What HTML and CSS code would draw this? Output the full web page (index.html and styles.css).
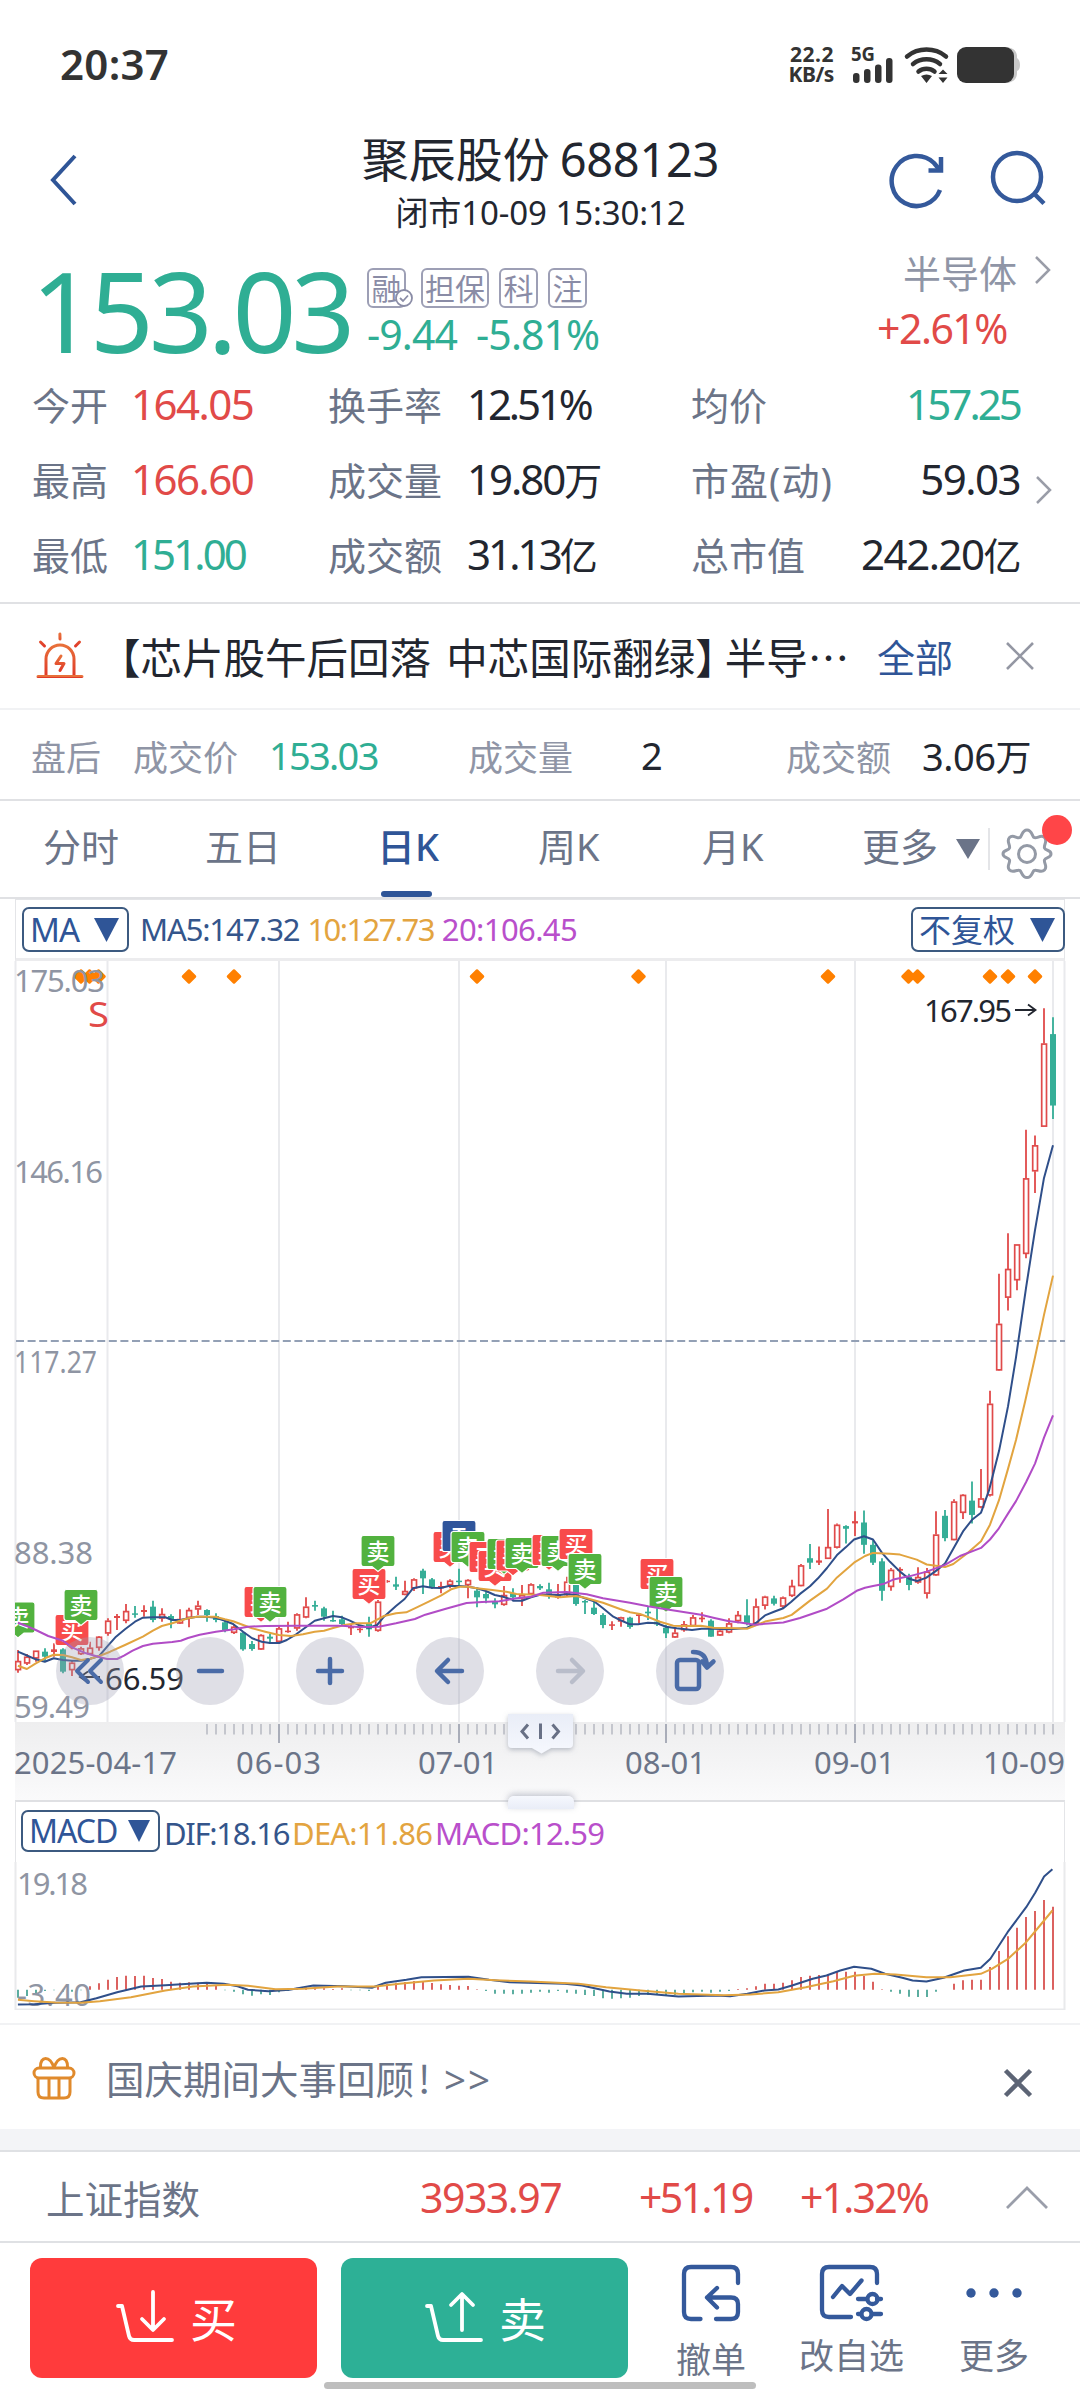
FILE: index.html
```html
<!DOCTYPE html>
<html lang="zh-CN">
<head>
<meta charset="utf-8">
<title>聚辰股份 688123</title>
<link rel="stylesheet" href="styles.css">
</head>
<body>
<main class="app">

<div class="status">
  <span class="clock">20:37</span>
  <div class="status-right">
    <div class="speed"><span class="rate">22.2</span><span>KB/s</span></div>
    <svg class="signal" width="46" height="40" viewBox="0 0 46 40">
      <text x="1" y="15.5" class="net" textLength="24" lengthAdjust="spacingAndGlyphs">5G</text>
      <rect x="3" y="28" width="6.5" height="10" rx="3"/><rect x="14" y="24" width="6.5" height="14" rx="3"/>
      <rect x="25" y="19.500" width="6.500" height="18.500" rx="3"/><rect x="36" y="13" width="6.500" height="25" rx="3"/>
    </svg>
    <svg class="wifi" width="48" height="40" viewBox="0 0 48 40">
      <g fill="none" stroke="#333" stroke-width="4.500" stroke-linecap="round">
        <path d="M4 11.500A31 31 0 0 1 43 11.500"/><path d="M10 19A22 22 0 0 1 37 19"/><path d="M15.500 26.500A13 13 0 0 1 31.500 26.500"/>
      </g>
      <path fill="#333" d="M18 31Q23.500 28 29 31L23.500 38ZM35.500 29L40 24.500L44.500 29ZM35.500 32.500H44.500L40 38Z"/>
    </svg>
    <svg class="battery" width="66" height="40" viewBox="0 0 66 40">
      <path fill="#c8c8c8" d="M48 2Q61 2 61 12V28Q61 38 48 38ZM61 13Q64 15 64 20T61 26Z"/>
      <rect x="1" y="2" width="57" height="36" rx="9" fill="#333"/>
    </svg>
  </div>
</div>

<header class="head">
  <svg class="back" width="30" height="54" viewBox="0 0 30 54"><path d="M26 3L4 27L26 51" fill="none" stroke="#2f5597" stroke-width="4"/></svg>
  <div class="titles">
    <div class="title"><span class="name">聚辰股份</span> <span class="code">688123</span></div>
    <div class="subtitle">闭市10-09 15:30:12</div>
  </div>
  <div class="head-icons">
    <svg width="60" height="60" viewBox="0 0 60 60"><g fill="none" stroke="#34599b" stroke-width="4.500"><path d="M53 40A25 25 0 1 1 47 13L52 19"/><path d="M41.500 20.500H54V7"/></g></svg>
    <svg width="60" height="60" viewBox="0 0 60 60"><g fill="none" stroke="#34599b" stroke-width="4.500"><circle cx="27" cy="27" r="24"/><path d="M43.500 43L54 53.500"/></g></svg>
  </div>
</header>

<section class="quote">
  <div class="price down">153.03</div>
  <div class="quote-mid">
    <div class="tags">
      <span class="tag">融<svg class="tick" width="20" height="20" viewBox="0 0 20 20"><circle cx="10" cy="10" r="8" fill="#fff" stroke="#8a8ca6" stroke-width="1.800"/><path d="M6 10L9 13L14 7.500" fill="none" stroke="#8a8ca6" stroke-width="1.800"/></svg></span>
      <span class="tag wide">担保</span><span class="tag">科</span><span class="tag">注</span>
    </div>
    <div class="change down"><span>-9.44</span><span>-5.81%</span></div>
  </div>
  <div class="sector">
    <div class="sector-name">半导体<svg width="18" height="30" viewBox="0 0 18 30"><path d="M2 2L15 15L2 28" fill="none" stroke="#9a9da8" stroke-width="2.500"/></svg></div>
    <div class="sector-chg up">+2.61%</div>
  </div>
</section>

<section class="stats">
  <span class="k">今开</span><span class="v up">164.05</span><span class="k">换手率</span><span class="v pct">12.51%</span><span class="k">均价</span><span class="v end tight down">157.25</span>
  <span class="k">最高</span><span class="v up">166.60</span><span class="k">成交量</span><span class="v vol">19.80<i>万</i></span><span class="k paren">市盈(动)</span><span class="v end">59.03</span>
  <span class="k">最低</span><span class="v tight down">151.00</span><span class="k">成交额</span><span class="v tight">31.13<i>亿</i></span><span class="k">总市值</span><span class="v end">242.20<i>亿</i></span>
  <svg class="more-arrow" width="18" height="30" viewBox="0 0 18 30"><path d="M2 2L15 15L2 28" fill="none" stroke="#9a9da8" stroke-width="2.500"/></svg>
</section>

<section class="news">
  <svg class="siren" width="48" height="50" viewBox="0 0 48 50">
    <defs><linearGradient id="hot" x1="0" y1="0" x2="0" y2="1"><stop offset="0" stop-color="#e8703a"/><stop offset="1" stop-color="#e03a28"/></linearGradient></defs>
    <g fill="none" stroke="url(#hot)" stroke-width="3" stroke-linecap="round" stroke-linejoin="round">
      <path d="M10 46V29A14 14 0 0 1 38 29V46"/><path d="M2 46.500L46 46.600"/><path d="M23.900 4L24 9M4.500 12L8.500 16M43.500 12L39.500 16"/><path d="M25 26L20 33.500H28L24 40.500"/>
    </g>
  </svg>
  <span class="headline">【芯片股午后回落 中芯国际翻绿<span class="close-q">】</span>半导<span class="dots">⋯</span></span>
  <span class="all">全部</span>
  <svg class="x" width="32" height="32" viewBox="0 0 32 32"><path d="M3 3L29 29M29 3L3 29" stroke="#9497a3" stroke-width="2.600"/></svg>
</section>

<section class="after">
  <span class="a1">盘后</span><span class="a2">成交价</span><b class="down a3">153.03</b><span class="a4">成交量</span><b class="a5">2</b><span class="a6">成交额</span><b class="a7">3.06<i>万</i></b>
</section>

<nav class="tabs">
  <span class="t1">分时</span><span class="t2">五日</span><span class="t3 on">日K</span><span class="t4">周K</span><span class="t5">月K</span><span class="t6">更多</span>
  <svg class="tri" width="24" height="20" viewBox="0 0 24 20"><path d="M0 0H24L12 20Z" fill="#6b7488"/></svg>
  <span class="sep"></span>
  <span class="gear">
    <svg width="52" height="54" viewBox="0 0 52 54"><g fill="none" stroke="#949aa6" stroke-width="3" stroke-linejoin="round"><path d="M26 4C31 4 31 10 33 11.500C36 13 40 8 43.500 11.500C47 15 42.500 19 43.500 22C44.500 25 50 23.500 50 28C50 32 44.500 31 43.500 34C42.500 37 47 40.500 43.500 44C40 47.500 36 43 33 44.500C31 46 31 51.500 26 51.500C21 51.500 21 46 19 44.500C16 43 12 47.500 8.500 44C5 40.500 9.500 37 8.500 34C7.500 31 2 32 2 28C2 23.500 7.500 25 8.500 22C9.500 19 5 15 8.500 11.500C12 8 16 13 19 11.500C21 10 21 4 26 4Z"/><circle cx="26" cy="28" r="8.500"/></g></svg>
    <em class="badge"></em>
  </span>
</nav>

<section class="panel">
  <div class="toolbar">
    <span class="select">MA<svg width="25" height="24" viewBox="0 0 25 24"><path d="M0 0H25L12.500 24Z" fill="#2f5597"/></svg></span>
    <span class="legend ma"><span class="blue">MA5:147.32</span><span class="gold">10:127.73</span><span class="violet">20:106.45</span></span>
    <span class="select right">不复权<svg width="25" height="24" viewBox="0 0 25 24"><path d="M0 0H25L12.500 24Z" fill="#2f5597"/></svg></span>
  </div>
  <svg class="kline" width="1080" height="839" viewBox="0 0 1080 839">
    <defs>
      <linearGradient id="strip" x1="0" y1="0" x2="0" y2="1"><stop offset="0" stop-color="#eeeeef"/><stop offset="1" stop-color="#fafafb"/></linearGradient>
      <linearGradient id="handle" x1="0" y1="0" x2="0" y2="1"><stop offset="0" stop-color="#e9edf7"/><stop offset="1" stop-color="#f6f8fe"/></linearGradient>
      <filter id="soft" x="-20%" y="-30%" width="140%" height="180%"><feDropShadow dx="0" dy="2" stdDeviation="2.500" flood-color="#8890a0" flood-opacity=".55"/></filter>
      <clipPath id="plot"><rect x="15" y="0" width="1050" height="762"/></clipPath>
    </defs>
    <g id="grid"></g>
    <rect x="15" y="761" width="1050" height="78" fill="url(#strip)"/>
    <path d="M16 380H1065" stroke="#93a0b5" stroke-width="2" stroke-dasharray="8 3.600"/>
    <g id="ticks"></g>
    <g id="diamonds" fill="#ff8000"></g>
    <g class="scale">
      <text x="14" y="31" textLength="91">175.03</text><text x="14" y="221.500" textLength="89">146.16</text><text x="14" y="411.500" textLength="83" lengthAdjust="spacingAndGlyphs">117.27</text><text x="14" y="603" textLength="79">88.38</text><text x="14" y="757" textLength="76">59.49</text>
    </g>
    <text x="88" y="66" class="s-mark" textLength="21" lengthAdjust="spacingAndGlyphs">S</text>
    <g id="candles" clip-path="url(#plot)"></g>
    <g id="lines" fill="none" stroke-width="2" stroke-linejoin="round"></g>
    <g id="badges" clip-path="url(#plot)"></g>
    <g id="over" fill="none" stroke-width="2" stroke-linejoin="round" clip-path="url(#plot)"></g>
    <g class="extreme"><text x="924" y="60.500" textLength="88">167.95</text><text x="105" y="728.500" textLength="79">66.59</text>
      <path d="M1015 49H1035M1028 43.500L1035.500 49L1028 54.500M100 716H80M88 710.500L80 716L88 721.500" fill="none" stroke="#22262f" stroke-width="1.800"/></g>
    <g fill="#9d9fb4" fill-opacity=".33"><circle cx="90" cy="710" r="34"/><circle cx="210" cy="710" r="34"/><circle cx="330" cy="710" r="34"/><circle cx="450" cy="710" r="34"/><circle cx="570" cy="710" r="34"/><circle cx="690" cy="710" r="34"/></g>
    <g fill="none" stroke="#4a6ba7" stroke-width="4.500" stroke-linecap="round" stroke-linejoin="round">
      <path d="M88 699L77 710L88 721M101 699L90 710L101 721" stroke-width="4"/>
      <path d="M199 710H222M318 710H342M330 698V722"/>
      <path d="M462 710H438M448 699L437 710L448 721"/>
      <path d="M558 710H582M572 699L583 710L572 721" stroke="#b9bdca"/>
      <rect x="677" y="699" width="22" height="29" rx="3"/><path d="M693 691Q707 691 707 706M702 700.500L707 706.500L713.500 700.500"/>
    </g>
    <g class="dates"><text x="14" y="813" textLength="163">2025-04-17</text><text x="236" y="813" textLength="85">06-03</text><text x="418" y="813" textLength="80">07-01</text><text x="625" y="813" textLength="81">08-01</text><text x="814" y="813" textLength="81">09-01</text><text x="983" y="813" textLength="82">10-09</text></g>
    <path filter="url(#soft)" fill="url(#handle)" d="M508 753H573V783Q573 787 569 787H551L541.500 792.500L532 787H512Q508 787 508 783Z"/>
    <path d="M528 763.500L522 770.500L528 777.500M540.500 762.500V778M552.500 763.500L558.500 770.500L552.500 777.500" fill="none" stroke="#687085" stroke-width="3"/>
  </svg>
  <span class="grip"></span>
  <div class="toolbar sub">
    <span class="select">MACD<svg width="22" height="22" viewBox="0 0 25 24" preserveAspectRatio="none"><path d="M0 0H25L12.500 24Z" fill="#2f5597"/></svg></span>
    <span class="legend macd"><span class="blue">DIF:18.16</span><span class="gold">DEA:11.86</span><span class="violet">MACD:12.59</span></span>
  </div>
  <svg class="macd-chart" width="1080" height="148" viewBox="0 0 1080 148">
    <path d="M15.500 0V147.500H1064.500V0" fill="none" stroke="#e9eaec" stroke-width="2"/>
    <g id="bars"></g>
    <g class="scale"><text x="17" y="33" textLength="71">19.18</text><text x="17" y="144" textLength="74">-3.40</text></g>
    <g id="mlines" fill="none" stroke-width="2" stroke-linejoin="round"></g>
  </svg>
</section>

<section class="notice">
  <svg width="48" height="48" viewBox="0 0 48 48"><g fill="none" stroke="#e08a2c" stroke-width="3" stroke-linejoin="round"><rect x="4" y="14" width="40" height="10" rx="5"/><path d="M8 24V38Q8 44 14 44H34Q40 44 40 38V24M19 24V44M29 24V44M24 14C20 1 10 2 10.500 13M24 14C28 1 38 2 37.500 13"/></g></svg>
  <span class="notice-text">国庆期间大事回顾<span class="bang">!</span><span class="gt">&gt;&gt;</span></span>
  <svg class="x low" width="32" height="32" viewBox="0 0 32 32"><path d="M3.500 3.500L28.500 28.500M28.500 3.500L3.500 28.500" stroke="#5c6475" stroke-width="4.500"/></svg>
</section>
<div class="band"></div>
<section class="index">
  <span class="iname">上证指数</span><span class="i1">3933.97</span><span class="i2">+51.19</span><span class="i3">+1.32%</span>
  <svg width="44" height="26" viewBox="0 0 44 26"><path d="M2 24L22 4L42 24" fill="none" stroke="#9a9eaa" stroke-width="2.800"/></svg>
</section>
<footer class="actions">
  <button class="btn buy"><svg width="60" height="54" viewBox="0 0 60 54"><g fill="none" stroke="#fff" stroke-width="3.800" stroke-linecap="round" stroke-linejoin="round"><path d="M3 16H7L14 46Q15 50 19 50H57"/><path d="M38 2V39M27 29L38 40L49 29"/></g></svg>买</button>
  <button class="btn sell"><svg width="60" height="54" viewBox="0 0 60 54"><g fill="none" stroke="#fff" stroke-width="3.800" stroke-linecap="round" stroke-linejoin="round"><path d="M3 16H7L14 46Q15 50 19 50H57"/><path d="M38 40V5M27 15L38 4L49 15"/></g></svg>卖</button>
  <div class="act c1"><svg width="64" height="60" viewBox="0 0 64 60"><g fill="none" stroke="#34599b" stroke-width="4.300" stroke-linecap="round" stroke-linejoin="round"><path d="M21.500 55H12Q5 55 5 48V10Q5 3 12 3H52Q59 3 59 10V19"/><path d="M37 55H52Q59 55 59 48V40Q59 33.500 52 33.500H28M38 24L28 33.500L38 43.500"/></g></svg><span>撤单</span></div>
  <div class="act c2"><svg width="68" height="60" viewBox="0 0 68 60"><g fill="none" stroke="#34599b" stroke-width="4.300" stroke-linecap="round" stroke-linejoin="round"><path d="M33 53H11Q4 53 4 46V10Q4 3 11 3H52Q59 3 59 10V19"/><path d="M15 33L24 22L32 30L43.500 16.500"/><path d="M40 35H49M59 35H63M40 50H43M54 50H63"/><circle cx="54.500" cy="35" r="5"/><circle cx="48.500" cy="50" r="5"/></g></svg><span>改自选</span></div>
  <div class="act c3"><svg width="64" height="60" viewBox="0 0 64 60"><g fill="#34599b"><circle cx="9" cy="29" r="4.700"/><circle cx="32" cy="29" r="4.700"/><circle cx="55" cy="29" r="4.700"/></g></svg><span>更多</span></div>
  <span class="homebar"></span>
</footer>
</main>
<script src="chart.js"></script>
</body>
</html>
```
FILE: styles.css
```css
* { box-sizing: border-box; }
body { margin: 0; background: #fff; }
.app {
  width: 1080px; height: 2392px; overflow: hidden; background: #fff; color: #22262f;
  font-family: "Noto Sans", "Noto Sans CJK SC", sans-serif;
  display: flex; flex-direction: column;
}
.app > * { flex: none; }
svg { display: block; flex: none; }
i { font-style: normal; }
.up { color: #e14a48; }
.down { color: #2fae94; }

.status { height: 130px; padding: 0 60px 0 60px; display: flex; align-items: center; justify-content: space-between; color: #333; }
.clock { font-size: 42px; font-weight: 600; letter-spacing: .3px; padding-bottom: 4px; }
.status-right { display: flex; align-items: center; }
.speed { display: flex; flex-direction: column; align-items: flex-end; font: 700 21px/20px "Noto Sans", sans-serif; letter-spacing: -.4px; margin: -3px 16px 0 0; }
.rate { letter-spacing: .5px; }
.signal { margin-right: 7px; overflow: visible; }
.signal rect { fill: #333; }
.net { font: 700 19px "Noto Sans", sans-serif; fill: #333; }
.wifi { margin-right: 5px; }
.battery { margin-right: -2px; }

.head { height: 110px; display: flex; align-items: center; padding: 0 30px 10px 49px; }
.titles { flex: 1; text-align: center; padding-left: 115px; padding-top: 3px; }
.title { font-size: 47px; line-height: 58px; letter-spacing: -.3px; white-space: nowrap; word-spacing: -2px; }
.name { letter-spacing: 0; font-family: "Noto Sans CJK SC"; }
.subtitle { font-size: 33px; line-height: 44px; letter-spacing: -.1px; margin-top: 3px; }
.head-icons { display: flex; gap: 43px; }

.quote { height: 128px; padding: 0 28px 0 31px; display: flex; }
.price { width: 336px; font-size: 112px; line-height: 140px; letter-spacing: -5.200px; }
.quote-mid { flex: 1; padding-top: 28px; }
.tags { display: flex; gap: 10px; height: 42px; }
.tag { position: relative; width: 39px; height: 40px; border: 2px solid #9d9fb5; border-radius: 6px; color: #8a8ca6; font: 30px/34px "Noto Sans CJK SC", sans-serif; text-align: center; }
.tag:first-child { margin-right: 5px; }
.tag.wide { width: 68px; }
.tick { position: absolute; right: -10px; bottom: -2px; }
.change { display: flex; gap: 19px; font-size: 41px; line-height: 50px; letter-spacing: -.900px; margin-top: -1px; }
.sector { width: 180px; padding-top: 3px; }
.sector-name { display: flex; align-items: center; justify-content: flex-end; gap: 17px; font-size: 38px; line-height: 64px; height: 60px; color: #8f95a6; }
.sector-name svg { margin-bottom: 7px; }
.sector-chg { font-size: 41px; line-height: 50px; letter-spacing: -1.500px; padding-left: 5px; }

.stats { position: relative; height: 238px; margin-top: -2px; padding: 0 60px 0 32px; border-bottom: 2px solid #e0e1e4; display: grid; grid-template-columns: 99px 197px 139px 224px 140px 1fr; grid-template-rows: repeat(3, 75px); align-items: center; color: #22262f; }
.k { font-size: 38px; color: #6b7488; white-space: nowrap; }
.k.paren { letter-spacing: 1px; }
.v { font-size: 42px; letter-spacing: -1.500px; white-space: nowrap; }
.v.vol { letter-spacing: -2px; }
.v.pct { letter-spacing: -3.100px; }
.v.tight { letter-spacing: -2.900px; }
.v i { font-size: 38px; }
.v.end { text-align: right; }
.more-arrow { position: absolute; right: 27px; top: 109px; }

.news { height: 106px; border-bottom: 2px solid #f1f2f4; display: flex; align-items: center; padding: 0 44px 0 36px; }
.headline { width: 793px; padding-left: 15px; font: 41.500px/60px "Noto Sans CJK SC", sans-serif; word-spacing: 6px; white-space: nowrap; }
.close-q { margin-right: -12px; }
.all { flex: 1; font-size: 38px; color: #2f5597; margin-top: -2px; }
.siren { margin-top: -3px; }

.after { height: 91px; border-bottom: 2px solid #e0e1e4; display: flex; align-items: center; padding: 1px 0 0 31px; font-size: 35px; color: #8f95a6; white-space: nowrap; }
.after b { font-size: 38px; font-weight: 400; letter-spacing: -1.200px; color: #22262f; }
.after b.down { color: #2fae94; letter-spacing: -1.700px; }
.after i { font-size: 36px; }
.a1 { width: 102px; } .a2 { width: 136px; } .a3 { width: 199px; } .a4 { width: 173px; } .a5 { width: 145px; } .a6 { width: 136px; }
.after .a7 { letter-spacing: -.500px; }

.tabs { height: 98px; border-bottom: 2px solid #e0e1e4; display: flex; align-items: center; padding-left: 43px; font-size: 38px; color: #6b7488; white-space: nowrap; }
.tabs > span:not(.sep):not(.gear) { height: 96px; line-height: 90px; }
.t1 { width: 162px; } .t2 { width: 172px; } .t4 { width: 164px; } .t5 { width: 160px; } .t6 { width: 94px; }
.t3 { width: 161px; }
.on { color: #2f5597; font-weight: 500; position: relative; }
.on::after { content: ""; position: absolute; left: 4px; bottom: 0; width: 51px; height: 6px; border-radius: 3px; background: #2f5597; }
.sep { width: 2px; height: 42px; background: #e4e5e8; margin: 0 11px 0 8px; }
.gear { position: relative; margin-top: 8px; }
.badge { position: absolute; right: -19px; top: -11px; width: 30px; height: 30px; border-radius: 50%; background: #ff4548; }

.panel { position: relative; height: 1126px; border-bottom: 2px solid #f1f2f4; }
.toolbar { height: 62px; margin: 0 15px; border: 1px solid #e4e5e8; border-bottom: 3px solid #ececee; display: flex; align-items: flex-start; padding: 7px 0 0 6px; font-size: 31px; }
.select { display: flex; align-items: center; justify-content: space-between; width: 107px; height: 45px; border: 2px solid #3c5a80; border-radius: 7px; padding: 0 8px 0 6px; color: #2f5597; font-size: 33px; letter-spacing: -1px; line-height: 40px; }
.select.right { width: 154px; margin-left: auto; margin-right: -1px; font-size: 32px; letter-spacing: 0; }
.legend { display: flex; line-height: 45px; white-space: nowrap; }
.legend.ma { gap: 8px; margin-left: 11px; letter-spacing: -1.150px; }
.legend.ma .gold { letter-spacing: -1.600px; }
.legend.ma .violet { letter-spacing: -.600px; }
.blue { color: #34558b; } .gold { color: #e3a440; } .violet { color: #b94fcb; }
.toolbar.sub { border-bottom: 0; border-top: 2px solid #dfe0e3; padding-top: 8px; padding-left: 5px; }
.toolbar.sub .select { width: 139px; height: 42px; font-size: 32px; }
.legend.macd { padding-top: 1px; gap: 3px; margin-left: 4px; letter-spacing: -.800px; }
.legend.macd .blue { letter-spacing: -1.300px; }
.grip { position: absolute; left: 508px; top: 897px; width: 66px; height: 13px; border-radius: 6px 6px 0 0; background: linear-gradient(#f6f8fe, #e9edf7); box-shadow: 0 -2px 6px rgba(110,118,140,.4); }
.panel text { font-family: "Noto Sans", sans-serif; font-size: 31px; }
.scale { fill: #8f95a3; }
.dates { fill: #6b7488; }
.extreme { fill: #22262f; }
.panel .s-mark { font-size: 34px; fill: #e14a48; }
.panel .flag { font: 500 23px "Noto Sans CJK SC", sans-serif; fill: #fff; text-anchor: middle; }

.notice { height: 104px; display: flex; align-items: center; padding: 2px 46px 0 30px; color: #6b7488; }
.notice-text { flex: 1; padding-left: 28px; font: 38.500px/56px "Noto Sans CJK SC", sans-serif; }
.bang { display: inline-block; width: 30px; padding-left: 4px; }
.gt { font-family: "Noto Sans", sans-serif; letter-spacing: 2px; }
.x.low { margin-top: 10px; }
.band { height: 23px; background: #f3f4f7; border-bottom: 2px solid #dfe1e4; }
.index { height: 91px; display: flex; align-items: center; padding: 1px 0 0 46px; border-bottom: 2px solid #dfe1e4; font-size: 41px; color: #e14a48; letter-spacing: -1.500px; white-space: nowrap; }
.iname { width: 374px; font-size: 38.500px; letter-spacing: 0; color: #6b7488; }
.i1 { width: 219px; } .i2 { width: 161px; letter-spacing: -2.600px; } .i3 { width: 205px; letter-spacing: -1.800px; }

.actions { position: relative; height: 149px; display: flex; padding: 15px 30px 0; }
.btn { width: 287px; height: 120px; border: 0; border-radius: 12px; color: #fff; display: flex; align-items: center; justify-content: center; gap: 15px; font: 47px/60px "Noto Sans CJK SC", sans-serif; padding: 0 0 3px 5px; }
.buy { background: #ff3b3c; }
.sell { background: #2db096; margin-left: 24px; padding-left: 1px; }
.act { display: flex; flex-direction: column; align-items: center; padding-top: 6px; color: #6b7488; font: 35px/40px "Noto Sans CJK SC", sans-serif; white-space: nowrap; }
.act span { margin-top: 10px; }
.c1 { margin-left: 48px; } .c1 span { margin-top: 14px; }
.c2 { margin-left: 53px; }
.c3 { margin-left: 55px; }
.homebar { position: absolute; left: 324px; top: 139px; width: 432px; height: 7px; border-radius: 4px; background: #bebebe; }
```
FILE: chart.js
```js
const NS = 'http://www.w3.org/2000/svg';
function add(parent, tag, attrs, text) {
  const el = document.createElementNS(NS, tag);
  for (const k in attrs) el.setAttribute(k, attrs[k]);
  if (text) el.textContent = text;
  document.getElementById(parent).appendChild(el);
}
const RED = '#e04a4a', GREEN = '#35ae97';
const X = i => 18 + 9 * i;

// grid and ruler
[15.5, 107.5, 279, 459, 666, 855, 1053, 1064.5].forEach(x => add('grid', 'path', { d: `M${x} 0V761`, stroke: '#e9eaed', 'stroke-width': 2 }));
for (let x = 207; x <= 1053; x += 9) {
  const major = [279, 459, 666, 855].includes(x);
  add('ticks', 'path', { d: `M${x} 763V${major ? 782 : 773.5}`, stroke: major ? '#a9adb9' : '#c4c6cd', 'stroke-width': 2 });
}
[81, 89.5, 98.500, 189, 234, 477, 638.5, 828, 908.5, 917.5, 990, 1008, 1035].forEach(x =>
  add('diamonds', 'path', { d: `M${x - 6} 15.500L${x} 9.500L${x + 6} 15.500L${x} 21.500Z`, stroke: '#ff8000', 'stroke-width': 2.5, 'stroke-linejoin': 'round' }));

// candles: colour, high, body top, body bottom, low
const early = `r510,543,570,578 r522,530,550,555 r512,512,535,545 g505,515,530,545 r490,508,516,530 g505,508,575,580 r540,548,570,588 r500,505,522,525 r485,503,522,525 r468,470,503,512 r415,422,460,467 r402,408,414,450 r372,393,422,430 g378,400,404,413 r376,390,396,410 g362,380,420,427 r385,402,415,425 g403,408,418,445 r388,417,430,432 r383,390,413,442 r362,377,388,405 g388,390,405,425 g400,408,420,427 g420,427,452,457 r432,440,458,462 g455,458,508,512 g483,492,507,512 r463,465,508,510 g462,470,476,492 r438,445,485,487 r425,452,455,458 r400,403,445,452 r352,380,412,415 g362,375,380,392 g380,385,410,422 g392,420,423,425 g407,418,432,438 r432,438,445,465 r442,446,450,458 g410,432,448,470 r355,365,452,455 r300,302,306,308 g290,313,320,330 r302,333,344,346 r295,298,325,333 g266,272,295,342 g294,298,322,327 r305,318,325,340 r298,302,315,325 g266,302,305,318 r298,300,315,355 g325,332,352,382 g335,342,355,370 g355,363,373,385 r318,345,374,377 g325,340,352,362 r315,345,355,378 r310,313,342,345 g313,318,325,330 g308,328,347,356 r312,345,353,356 r290,305,345,350 g313,315,372,377 g360,363,367,402 g365,383,402,405 g400,405,435,445 r424,433,437,450 r410,412,424,440 g410,413,441,446 r400,403,408,430 g378,395,400,420 g385,425,433,438 g435,443,460,474 r443,458,472,474 r423,433,450,455 r405,412,438,441 r397,413,418,427 g418,422,470,470 r448,452,466,468 r415,430,457,460 r393,405,423,430`;
const late = `g1432,1468,1485,1490 r1430,1448,1486,1488 r1424,1426,1446,1455 g1424,1430,1442,1446 r1426,1428,1448,1453 r1388,1402,1424,1427 r1353,1356,1402,1403 g1308,1340,1350,1364 r1314,1345,1350,1355 r1230,1315,1341,1341 r1262,1265,1316,1318 g1266,1268,1274,1307 r1235,1257,1262,1290 g1233,1260,1310,1330 g1300,1310,1350,1355 g1340,1347,1413,1435 r1362,1366,1404,1413 r1360,1364,1368,1395 g1375,1382,1400,1412 r1360,1382,1394,1397 r1362,1370,1419,1430 r1235,1287,1378,1380 g1232,1245,1295,1302 r1208,1213,1299,1300 r1196,1198,1238,1252 g1168,1211,1243,1262 r1140,1206,1226,1228 r965,994,1199,1202 r703,815,919,920 r612,692,756,785 r637,637,717,740 r380,489,658,668 r393,415,473,522 r108,187,373,373 g128,166,326,356`;
function candles(src, first, base, scale) {
  src.split(' ').forEach((s, n) => {
    const [h, t, b, l] = s.slice(1).split(',').map(v => base + v / scale);
    const x = X(first + n), red = s[0] === 'r', c = red ? RED : GREEN;
    const hollow = red && b - t > 3;
    add('candles', 'path', { d: hollow ? `M${x} ${h}V${t}M${x} ${b}V${l}` : `M${x} ${h}V${l}`, stroke: c, 'stroke-width': 1.8 });
    if (hollow) add('candles', 'rect', { x: x - 2.3, y: t + .6, width: 4.8, height: b - t - 1, fill: '#fff', stroke: c, 'stroke-width': 1.7 });
    else add('candles', 'rect', { x: x - 3, y: t, width: 6, height: Math.max(b - t, 1.5), fill: c });
  });
}
candles(early, 0, 519, 3);
candles(late, 81, -1, 2.24);

// moving averages, each in three stretches with its own scale
function stretch(src, sx, ox, sy, oy) {
  return src.trim().split(/\s+/).map(p => { const [x, y] = p.split(','); return `${(x / sx + ox).toFixed(1)} ${(y / sy + oy).toFixed(1)}`; });
}
function line(target, color, a, b, c) {
  const pts = [...stretch(a, 2.904, 0, 3, 519), ...stretch(b, 3, 400, 3, 519), ...stretch(c, 3, 740, 2.24, -1)];
  add(target, 'path', { d: 'M' + pts.join('L'), stroke: color });
}
line('lines', '#2f4f8a',
  '52,515 75,525 104,538 130,545 156,535 183,540 209,542 235,542 262,536 288,528 311,500 337,470 363,448 392,425 415,413 444,412 480,412 500,420 525,420 546,415 572,410 600,410 627,413 653,422 677,432 706,455 732,475 760,485 784,489 811,489 833,480 860,463 890,440 914,422 941,415 967,408 993,412 1016,422 1042,435 1071,443 1095,435 1115,410 1150,378 1175,357 1199,325 1228,319 1254,323 1280,324 1303,318 1333,318 1360,320 1385,325 1411,333 1437,345 1461,350 1490,360',
  '339,362 366,362 393,352 420,344 447,344 480,345 500,342 528,345 555,355 582,364 609,385 640,410 660,420 690,433 714,433 744,428 771,430 798,440 830,445 876,450 905,446 940,446 984,448 1011,446',
  '21,1496 48,1485 75,1468 102,1460 130,1452 153,1438 180,1420 210,1403 234,1385 261,1362 291,1333 318,1315 342,1298 372,1291 399,1298 426,1328 450,1348 480,1370 507,1386 531,1391 558,1384 585,1370 615,1352 639,1320 669,1280 696,1254 723,1238 747,1188 777,1100 804,1000 828,890 858,735 885,605 912,488 939,415');
line('lines', '#e2a43f',
  '52,557 78,567 104,550 130,535 156,524 183,525 209,532 235,540 262,536 290,527 320,515 363,495 415,470 444,452 470,438 500,430 546,415 572,410 625,410 653,418 677,424 706,435 732,445 770,455 810,465 845,468 880,463 914,455 941,452 970,443 1000,435 1035,430 1075,430 1115,408 1150,400 1180,397 1215,380 1245,365 1280,347 1310,328 1335,320 1360,320 1385,325 1430,330 1470,335 1500,342',
  '420,345 480,352 528,348 555,353 609,368 660,387 690,397 720,402 750,413 780,425 820,437 850,438 903,437 940,443 1011,445',
  '21,1498 48,1490 75,1482 130,1474 155,1467 210,1435 261,1408 291,1383 342,1350 375,1335 399,1328 450,1330 480,1332 530,1343 560,1354 615,1360 640,1353 680,1330 723,1302 750,1265 777,1210 804,1140 828,1075 855,990 885,890 912,795 939,707');
line('over', '#b14cc6',
  '52,428 75,437 104,450 140,468 183,482 209,502 250,520 290,532 311,537 340,537 360,527 385,512 415,498 444,491 500,486 525,482 546,474 580,464 627,455 680,448 720,440 770,438 860,437 993,437 1040,441 1100,440 1150,430 1205,417 1235,404 1295,386 1355,369 1400,366 1450,364 1500,355',
  '393,350 430,338 500,336 560,343 609,355 690,368 744,379 798,388 903,404 940,413 984,423',
  '0,1484 45,1489 75,1487 130,1484 180,1474 261,1453 310,1432 350,1413 375,1406 399,1402 430,1398 460,1388 510,1380 560,1370 615,1355 660,1335 723,1317 750,1298 775,1275 804,1240 828,1212 858,1170 885,1128 912,1070 939,1020');

// trade flags
const kinds = { s: ['卖', '#52b23f'], b: ['买', '#f84b4b'], t: ['T', '#30559b'] };
[['s', 18, 641], ['b', 72, 653.5], ['s', 81, 628.5], ['b', 261, 625.5], ['s', 270, 625.5], ['b', 369, 607.5], ['s', 378, 574.5],
 ['b', 450, 570.5], ['t', 459, 559.5], ['s', 468, 570.5], ['b', 486, 580.5], ['b', 495, 589.5], ['s', 504, 577.5], ['b', 513, 579], ['s', 522, 576.5],
 ['b', 549, 573.5], ['s', 558, 574.5], ['b', 576, 567.5], ['s', 585, 592.5], ['b', 657, 597.5], ['s', 666, 615.5]].forEach(([k, x, y]) => {
  const [label, c] = kinds[k];
  add('badges', 'path', { d: `M${x - 14.5} ${y}H${x + 14.5}Q${x + 17} ${y} ${x + 17} ${y + 2.500}V${y + 28.5}Q${x + 17} ${y + 31} ${x + 14.5} ${y + 31}H${x + 6}L${x} ${y + 36}L${x - 6} ${y + 31}H${x - 14.5}Q${x - 17} ${y + 31} ${x - 17} ${y + 28.5}V${y + 2.500}Q${x - 17} ${y} ${x - 14.5} ${y}Z`, fill: c, stroke: '#fff', 'stroke-width': 1.2 });
  add('badges', 'text', { x, y: y + 24, class: 'flag' }, label);
});

// MACD histogram ends and lines
const ends = [890,885,880,870,868,872,872,868,856,847,836,828,824,825,824,831,834,842,845,844,845,848,855,868,872,880,884,880,882,874,870,860,858,858,862,864,862,868,868,870,855,848,845,843,840,843,846,850,852,854,855,865,870,878,878,880,878,875,872,875,870,875,878,882,885,892,893,892,890,885,882,882,885,882,880,874,872,875,872,870,864,862,856,848,848,845,838,828,824,822,820,812,812,812,825,842,865,872,878,887,888,888,872,866,848,838,836,836,798,750,706,680,648,630,597,617];
ends.forEach((e, i) => add('bars', 'path', { d: `M${X(i)} ${866 / 3 - 161}V${e / 3 - 161}`, stroke: e < 866 ? '#d8514f' : '#4aa596', 'stroke-width': 1.8 }));
function macd(color, src) { add('mlines', 'path', { d: 'M' + stretch(src, 1.4519, 0, 3, -161.5).join('L'), stroke: color }); }
macd('#2f4f8a', '26,912 50,911 80,907 117,905 140,893 170,875 205,858 240,854 275,850 300,847 325,850 345,857 360,868 390,872 420,868 455,855 500,857 540,862 560,847 590,838 612,830 680,829 710,838 740,845 820,850 845,855 885,873 910,880 940,880 985,888 1040,885 1060,887 1085,880 1110,870 1130,867 1150,855 1180,835 1200,825 1220,810 1240,799 1265,805 1285,820 1310,832 1325,840 1345,843 1370,832 1400,810 1424,802 1438,775 1463,695 1490,620 1503,577 1516,528 1528,506');
macd('#e2a43f', '26,898 50,902 80,906 117,907 145,902 190,890 240,870 280,858 330,853 360,856 400,866 440,865 490,858 545,858 580,850 630,840 680,835 720,839 770,843 840,850 880,860 930,870 985,880 1050,884 1090,882 1130,875 1170,860 1210,842 1240,826 1270,820 1300,822 1345,830 1380,830 1424,820 1440,805 1463,776 1490,725 1510,675 1528,630');
```
